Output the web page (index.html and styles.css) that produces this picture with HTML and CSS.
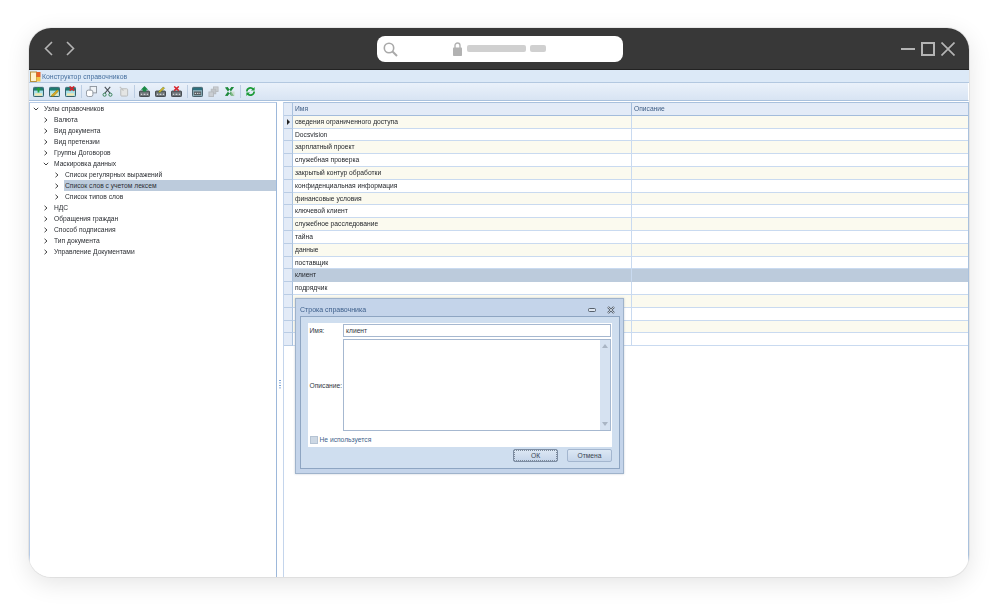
FILE: index.html
```html
<!DOCTYPE html>
<html lang="ru">
<head>
    <meta charset="UTF-8">
    <title>Конструктор справочников</title>
    <link rel="stylesheet" href="styles.css">
</head>
<body>
    <svg class="defs" width="0" height="0">
        <symbol id="chev-right" viewBox="0 0 6 6"><path d="M1.500 .8 4 3 1.500 5.200" fill="none" stroke="#444" stroke-width="1"/></symbol>
        <symbol id="chev-down" viewBox="0 0 6 6"><path d="M.8 1.800 3 4 5.200 1.800" fill="none" stroke="#444" stroke-width="1"/></symbol>
        <symbol id="page" viewBox="0 0 12 12"><rect x=".5" y="1.500" width="11" height="10" rx="1" fill="#a8dfe8" stroke="#24505c"/><rect x="1" y="2" width="10" height="3" fill="#1f7a70"/><rect x="2" y="8" width="8" height="2.500" fill="#f3e6ae"/></symbol>
        <symbol id="db" viewBox="0 0 12 12"><rect x=".5" y="5.500" width="11" height="6" rx="1" fill="#6d7378" stroke="#3b4044"/><path d="M2 9h1.500M5 9h2M8.500 9H10" stroke="#fff"/></symbol>
    </svg>

    <div class="window">
        <div class="chrome">
            <div class="nav-arrows">
                <svg width="9" height="15" viewBox="0 0 9 15"><path d="M8 1 1.500 7.500 8 14" fill="none" stroke="#b4b4b4" stroke-width="1.600"/></svg>
                <svg width="9" height="15" viewBox="0 0 9 15"><path d="M1 1 7.500 7.500 1 14" fill="none" stroke="#b4b4b4" stroke-width="1.600"/></svg>
            </div>
            <div class="address">
                <svg class="search" width="15" height="15" viewBox="0 0 15 15"><circle cx="6" cy="6" r="4.700" fill="none" stroke="#a9a9a9" stroke-width="1.600"/><path d="M9.500 9.500 14 14" stroke="#a9a9a9" stroke-width="2"/></svg>
                <svg class="lock" width="9" height="14" viewBox="0 0 9 14"><path d="M2 6V3.500a2.500 2.500 0 0 1 5 0V6" fill="none" stroke="#b2b2b2" stroke-width="1.400"/><rect y="5.500" width="9" height="8.500" rx=".8" fill="#b2b2b2"/></svg>
                <span class="pill pill-long"></span>
                <span class="pill pill-short"></span>
            </div>
            <div class="win-controls">
                <svg width="14" height="14" viewBox="0 0 14 14"><path d="M0 7h14" stroke="#b4b4b4" stroke-width="1.800"/></svg>
                <svg width="14" height="14" viewBox="0 0 14 14"><rect x="1" y="1" width="12" height="12" fill="none" stroke="#b4b4b4" stroke-width="2"/></svg>
                <svg width="14" height="14" viewBox="0 0 14 14"><path d="M.5.5l13 13M13.500.5l-13 13" stroke="#b4b4b4" stroke-width="1.700"/></svg>
            </div>
        </div>

        <div class="app">
            <div class="titlebar">
                <svg width="11" height="11" viewBox="0 0 11 11"><rect x=".5" y="1" width="6" height="9.500" fill="#fff3cf" stroke="#b8903c"/><rect x="6.500" y="1" width="4" height="5" fill="#e8622a"/><rect x="6.500" y="6" width="4" height="4.500" fill="#f3c64a"/></svg>
                <span>Конструктор справочников</span>
            </div>

            <div class="toolbar">
                <svg class="tool" viewBox="0 0 12 12"><use href="#page"/><path d="M6 1 9 4H7v3H5V4H3z" fill="#1f9d3a"/></svg>
                <svg class="tool" viewBox="0 0 12 12"><use href="#page"/><path d="M3 10 9 4l1.500 1.500-6 6H3z" fill="#e2a91e" stroke="#5a6b1a" stroke-width=".5"/></svg>
                <svg class="tool" viewBox="0 0 12 12"><use href="#page"/><path d="M5 .5l5 4.500M10 .5 5 5" stroke="#d8232a" stroke-width="1.600"/></svg>
                <span class="tool-sep"></span>
                <svg class="tool" viewBox="0 0 12 12"><rect x="4.500" y=".5" width="7" height="7" fill="#eef2f6" stroke="#8c949c"/><rect x=".5" y="4.500" width="7" height="7" rx="2" fill="#fff" stroke="#8c949c"/></svg>
                <svg class="tool" viewBox="0 0 12 12"><path d="M3 1l6 7M9 1 3 8" stroke="#4a5157" stroke-width="1.200"/><circle cx="2.800" cy="9.500" r="1.700" fill="none" stroke="#2e7d4f"/><circle cx="9.200" cy="9.500" r="1.700" fill="none" stroke="#2e7d4f"/></svg>
                <svg class="tool dim" viewBox="0 0 12 12"><rect x="3" y="3" width="7.500" height="8" rx="1" fill="#e6e4de" stroke="#a9a9a4"/><path d="M2 1l4 4" stroke="#b5b5b0" stroke-width="1.400"/></svg>
                <span class="tool-sep"></span>
                <svg class="tool" viewBox="0 0 12 12"><use href="#db"/><path d="M6 0 10 4H8v2H4V4H2z" fill="#1c8a48"/></svg>
                <svg class="tool" viewBox="0 0 12 12"><use href="#db"/><path d="M4 6 9 1l1.500 1.500-5 4.500H4z" fill="#dcb32a" stroke="#3f7a2e" stroke-width=".5"/></svg>
                <svg class="tool" viewBox="0 0 12 12"><use href="#db"/><path d="M3.500 .5l5 4.500M8.500 .5l-5 4.500" stroke="#d8232a" stroke-width="1.600"/></svg>
                <span class="tool-sep"></span>
                <svg class="tool" viewBox="0 0 12 12"><rect x=".5" y="1.500" width="11" height="10" rx="1" fill="#8fb2bd" stroke="#39525c"/><rect x="1" y="2" width="10" height="2.500" fill="#2d6f7d"/><rect x="2" y="6" width="8" height="4" fill="#565c60"/><path d="M3 8h1.500M5.500 8h1.500M8 8h1" stroke="#fff"/></svg>
                <svg class="tool dim" viewBox="0 0 12 12"><rect x="6" y="1" width="5" height="5" fill="#c4c6c8" stroke="#a8aaac"/><rect x="3.500" y="3.500" width="5" height="5" fill="#b8babc" stroke="#a8aaac"/><rect x="1" y="6.500" width="5" height="5" fill="#c4c6c8" stroke="#a8aaac"/></svg>
                <svg class="tool" viewBox="0 0 12 12"><path d="M1 1.500 4 1l7 9.500-3 .5zM11 1 8 1 1 10.500l3 .5z" fill="#1f8a3c"/><path d="M7 6h4.500v5H7z" fill="#bcd6b8" opacity=".6"/></svg>
                <span class="tool-sep"></span>
                <svg class="tool" viewBox="0 0 12 12"><path d="M2 6a4 4 0 0 1 7-2.600M10 6a4 4 0 0 1-7 2.600" fill="none" stroke="#1c9a36" stroke-width="1.800"/><path d="M10.500 1v4h-4zM1.500 11V7h4z" fill="#1c9a36"/></svg>
            </div>

            <div class="workspace">
                <aside class="tree">
                    <div class="node lvl-0"><svg><use href="#chev-down"/></svg><span>Узлы справочников</span></div>
                    <div class="node lvl-1"><svg><use href="#chev-right"/></svg><span>Валюта</span></div>
                    <div class="node lvl-1"><svg><use href="#chev-right"/></svg><span>Вид документа</span></div>
                    <div class="node lvl-1"><svg><use href="#chev-right"/></svg><span>Вид претензии</span></div>
                    <div class="node lvl-1"><svg><use href="#chev-right"/></svg><span>Группы Договоров</span></div>
                    <div class="node lvl-1"><svg><use href="#chev-down"/></svg><span>Маскировка данных</span></div>
                    <div class="node lvl-2"><svg><use href="#chev-right"/></svg><span>Список регулярных выражений</span></div>
                    <div class="node lvl-2 selected"><svg><use href="#chev-right"/></svg><span>Список слов с учетом лексем</span></div>
                    <div class="node lvl-2"><svg><use href="#chev-right"/></svg><span>Список типов слов</span></div>
                    <div class="node lvl-1"><svg><use href="#chev-right"/></svg><span>НДС</span></div>
                    <div class="node lvl-1"><svg><use href="#chev-right"/></svg><span>Обращения граждан</span></div>
                    <div class="node lvl-1"><svg><use href="#chev-right"/></svg><span>Способ подписания</span></div>
                    <div class="node lvl-1"><svg><use href="#chev-right"/></svg><span>Тип документа</span></div>
                    <div class="node lvl-1"><svg><use href="#chev-right"/></svg><span>Управление Документами</span></div>
                </aside>

                <div class="splitter"><span></span></div>

                <section class="grid">
                    <div class="row head"><div class="sel"></div><div class="cell">Имя</div><div class="cell">Описание</div></div>
                    <div class="row odd"><div class="sel current"></div><div class="cell">сведения ограниченного доступа</div><div class="cell"></div></div>
                    <div class="row"><div class="sel"></div><div class="cell">Docsvision</div><div class="cell"></div></div>
                    <div class="row odd"><div class="sel"></div><div class="cell">зарплатный проект</div><div class="cell"></div></div>
                    <div class="row"><div class="sel"></div><div class="cell">служебная проверка</div><div class="cell"></div></div>
                    <div class="row odd"><div class="sel"></div><div class="cell">закрытый контур обработки</div><div class="cell"></div></div>
                    <div class="row"><div class="sel"></div><div class="cell">конфиденциальная информация</div><div class="cell"></div></div>
                    <div class="row odd"><div class="sel"></div><div class="cell">финансовые условия</div><div class="cell"></div></div>
                    <div class="row"><div class="sel"></div><div class="cell">ключевой клиент</div><div class="cell"></div></div>
                    <div class="row odd"><div class="sel"></div><div class="cell">служебное расследование</div><div class="cell"></div></div>
                    <div class="row"><div class="sel"></div><div class="cell">тайна</div><div class="cell"></div></div>
                    <div class="row odd"><div class="sel"></div><div class="cell">данные</div><div class="cell"></div></div>
                    <div class="row"><div class="sel"></div><div class="cell">поставщик</div><div class="cell"></div></div>
                    <div class="row active"><div class="sel"></div><div class="cell">клиент</div><div class="cell"></div></div>
                    <div class="row"><div class="sel"></div><div class="cell">подрядчик</div><div class="cell"></div></div>
                    <div class="row odd"><div class="sel"></div><div class="cell"></div><div class="cell"></div></div>
                    <div class="row"><div class="sel"></div><div class="cell"></div><div class="cell"></div></div>
                    <div class="row odd"><div class="sel"></div><div class="cell"></div><div class="cell"></div></div>
                    <div class="row"><div class="sel"></div><div class="cell"></div><div class="cell"></div></div>
                </section>
            </div>

            <!-- Modal editor over the grid -->
            <div class="dialog">
                <div class="dialog-title">
                    <span class="dialog-name">Строка справочника</span>
                    <svg width="8" height="6" viewBox="0 0 8 6"><rect x=".5" y="1.500" width="7" height="3" rx="1" fill="#dfe7f1" stroke="#56606c"/></svg>
                    <svg width="8" height="8" viewBox="0 0 8 8"><path d="M1 1l6 6M7 1 1 7" stroke="#56606c" stroke-width="2.200"/><path d="M1 1l6 6M7 1 1 7" stroke="#dfe7f1" stroke-width=".8"/></svg>
                </div>
                <div class="dialog-frame">
                    <div class="dialog-form">
                        <div class="form-row">
                            <label>Имя:</label>
                            <div class="input">клиент</div>
                        </div>
                        <div class="form-row form-row-area">
                            <label>Описание:</label>
                            <div class="textarea">
                                <div class="scroll">
                                    <svg width="6" height="4" viewBox="0 0 6 4"><path d="M0 4 3 0l3 4z" fill="#a9b5c4"/></svg>
                                    <svg width="6" height="4" viewBox="0 0 6 4"><path d="M0 0 3 4l3-4z" fill="#a9b5c4"/></svg>
                                </div>
                            </div>
                        </div>
                        <div class="check-row"><span class="check"></span><span>Не используется</span></div>
                    </div>
                    <div class="dialog-buttons">
                        <div class="btn btn-default"><span>ОК</span></div>
                        <div class="btn"><span>Отмена</span></div>
                    </div>
                </div>
            </div>
        </div>
    </div>
</body>
</html>
```

FILE: styles.css
```css
* {
    margin: 0;
    padding: 0;
    box-sizing: border-box;
}

html, body {
    width: 100%;
    height: 100%;
    overflow: hidden;
}

body {
    background: #fff;
    font-family: "Liberation Sans", Arial, sans-serif;
    font-size: 6.700px;
    color: #22262c;
}

.defs {
    position: absolute;
}

/* Browser mockup */
.window {
    width: 940px;
    height: 549px;
    margin: 28px 0 0 29px;
    border-radius: 22px;
    overflow: hidden;
    background: #fff;
    display: flex;
    flex-direction: column;
    box-shadow: 0 6px 24px rgba(0, 0, 0, 0.11), 0 0 0 1px rgba(0, 0, 0, 0.06);
}

.chrome {
    height: 42px;
    flex-shrink: 0;
    background: #383838;
    border-bottom: 1px solid #222;
    display: grid;
    grid-template-columns: 348px 246px 1fr;
    align-items: center;
}

.nav-arrows {
    display: flex;
    gap: 13px;
    padding-left: 15px;
}

.address {
    height: 26px;
    background: #fff;
    border-radius: 8px;
    display: flex;
    align-items: center;
    position: relative;
    padding-left: 76px;
}

.address .search {
    position: absolute;
    left: 6px;
    top: 6px;
}

.lock {
    margin-right: 5px;
}

.pill {
    height: 7px;
    background: #d0d0d0;
    border-radius: 2px;
}

.pill-long {
    width: 59px;
    margin-right: 4px;
}

.pill-short {
    width: 16px;
}

.win-controls {
    display: flex;
    justify-content: flex-end;
    gap: 6px;
    padding-right: 14px;
}

/* Application */
.app {
    flex: 1;
    min-height: 0;
    display: flex;
    flex-direction: column;
    position: relative;
    filter: blur(0.3px);
}

.titlebar {
    height: 13px;
    flex-shrink: 0;
    background: #dce9f7;
    border-bottom: 1px solid #b3c8e0;
    color: #47709f;
    font-size: 6.900px;
    display: flex;
    align-items: center;
    gap: 1px;
    padding-left: 1px;
}

.toolbar {
    height: 18px;
    flex-shrink: 0;
    background: linear-gradient(#eaf1fa, #d8e4f3);
    border-bottom: 1px solid #a9c1dd;
    border-right: 1px solid #fff;
    display: flex;
    align-items: center;
    padding-left: 1.500px;
}

.tool {
    width: 11px;
    height: 11px;
    margin: 0 2.500px;
}

.tool.dim {
    opacity: 0.75;
}

.tool-sep {
    width: 1px;
    height: 13px;
    background: #bccde2;
    margin: 0 2px;
}

.workspace {
    flex: 1;
    min-height: 0;
    display: flex;
    margin-top: 1px;
}

.tree {
    width: 248px;
    flex-shrink: 0;
    border-left: 1px solid #b7cbe6;
    border-right: 1px solid #9db8da;
    border-top: 1px solid #b7cbe6;
    background: #fff;
}

.node {
    height: 11px;
    display: flex;
    align-items: center;
    color: #2b2e33;
}

.node svg {
    width: 6px;
    height: 6px;
    flex-shrink: 0;
    margin-right: 5px;
}

.node.lvl-0 { padding-left: 3px; }
.node.lvl-1 { padding-left: 13px; }
.node.lvl-2 { padding-left: 24px; }

.node.selected span {
    background: #bccbdc;
    flex: 1;
    line-height: 11px;
    padding-left: 1px;
    margin-left: -1px;
}

.splitter {
    width: 6px;
    flex-shrink: 0;
    background: #fff;
    display: flex;
    align-items: center;
    justify-content: center;
}

.splitter span {
    width: 2px;
    height: 10px;
    background-image: linear-gradient(#6f9ad0 50%, transparent 50%);
    background-size: 2px 2.500px;
    margin-top: 90px;
    margin-left: -1px;
}

.grid {
    flex: 1;
    min-width: 0;
    border-top: 1px solid #a9c1dd;
    border-left: 1px solid #c4d5ec;
    border-right: 1px solid #a9c1dd;
}

.row {
    display: grid;
    grid-template-columns: 9px 338px 1fr;
    height: 12.800px;
    color: #25282d;
}

.row .sel {
    background: #e3ebf7;
    border-right: 1px solid #a9c1dd;
    border-bottom: 1px solid #b9cce4;
    position: relative;
}

.sel.current::after {
    content: "";
    position: absolute;
    left: 3px;
    top: 3px;
    border-left: 3px solid #222;
    border-top: 3px solid transparent;
    border-bottom: 3px solid transparent;
}

.cell {
    padding-left: 2px;
    line-height: 12px;
    border-bottom: 1px solid #c9daf0;
    white-space: nowrap;
    overflow: hidden;
}

.cell + .cell {
    border-left: 1px solid #c9daf0;
}

.row.head .cell {
    background: #e3ebf7;
    color: #3e5d84;
    border-bottom-color: #a3bcdb;
}

.row.head .cell + .cell {
    border-left-color: #a3bcdb;
}

.row.odd .cell {
    background: #fbfaef;
}

.row.active .cell {
    background: #bccbdc;
    border-bottom-color: #bccbdc;
}

/* Dialog */
.dialog {
    position: absolute;
    left: 266px;
    top: 228px;
    width: 329px;
    height: 176px;
    background: #c4d4ea;
    border: 1px solid #9fb3cb;
    display: flex;
    flex-direction: column;
    padding: 0 3px 4px 4px;
    box-shadow: 0 0 2px rgba(90, 110, 140, 0.35);
}

.dialog-title {
    height: 17px;
    flex-shrink: 0;
    display: flex;
    align-items: center;
    gap: 11px;
    padding: 4px 5px 0 0;
    color: #3d5f8b;
    font-size: 7px;
}

.dialog-name {
    flex: 1;
}

.dialog-frame {
    flex: 1;
    min-height: 0;
    background: #cfdeef;
    border: 1px solid #8ea5c2;
    padding: 6px 7px 0;
    display: flex;
    flex-direction: column;
}

.dialog-form {
    height: 124px;
    flex-shrink: 0;
    background: #fff;
    padding: 1px 1px 0 0;
    display: flex;
    flex-direction: column;
    gap: 2px;
}

.form-row {
    display: flex;
    align-items: center;
    height: 13px;
    color: #33383f;
}

.form-row label {
    width: 35px;
    flex-shrink: 0;
    padding-left: 1.500px;
    text-align: left;
}

.input {
    flex: 1;
    height: 13px;
    line-height: 11px;
    padding-left: 2px;
    border: 1px solid #a6b8d0;
}

.form-row-area {
    height: 92px;
}

.textarea {
    flex: 1;
    height: 92px;
    border: 1px solid #a6b8d0;
    display: flex;
    justify-content: flex-end;
}

.scroll {
    width: 10px;
    background: #d6e2f1;
    display: flex;
    flex-direction: column;
    align-items: center;
    justify-content: space-between;
    padding: 4px 0;
}

.check-row {
    display: flex;
    align-items: center;
    gap: 2px;
    height: 13px;
    padding-left: 1.500px;
    color: #3d5f8b;
}

.check {
    width: 8px;
    height: 8px;
    background: #cdd8e4;
    border: 1px solid #b5c3d3;
}

.dialog-buttons {
    display: flex;
    justify-content: flex-end;
    gap: 9px;
    padding-top: 2px;
}

.btn {
    width: 45px;
    height: 13px;
    background: linear-gradient(#dce7f4, #c6d6ea);
    border: 1px solid #a3b6cf;
    border-radius: 2px;
    text-align: center;
    line-height: 11px;
    color: #3a4654;
}

.btn-default {
    border-color: #7d8da3;
    outline: 1px dotted #7d8a9a;
    outline-offset: -2px;
}
```
